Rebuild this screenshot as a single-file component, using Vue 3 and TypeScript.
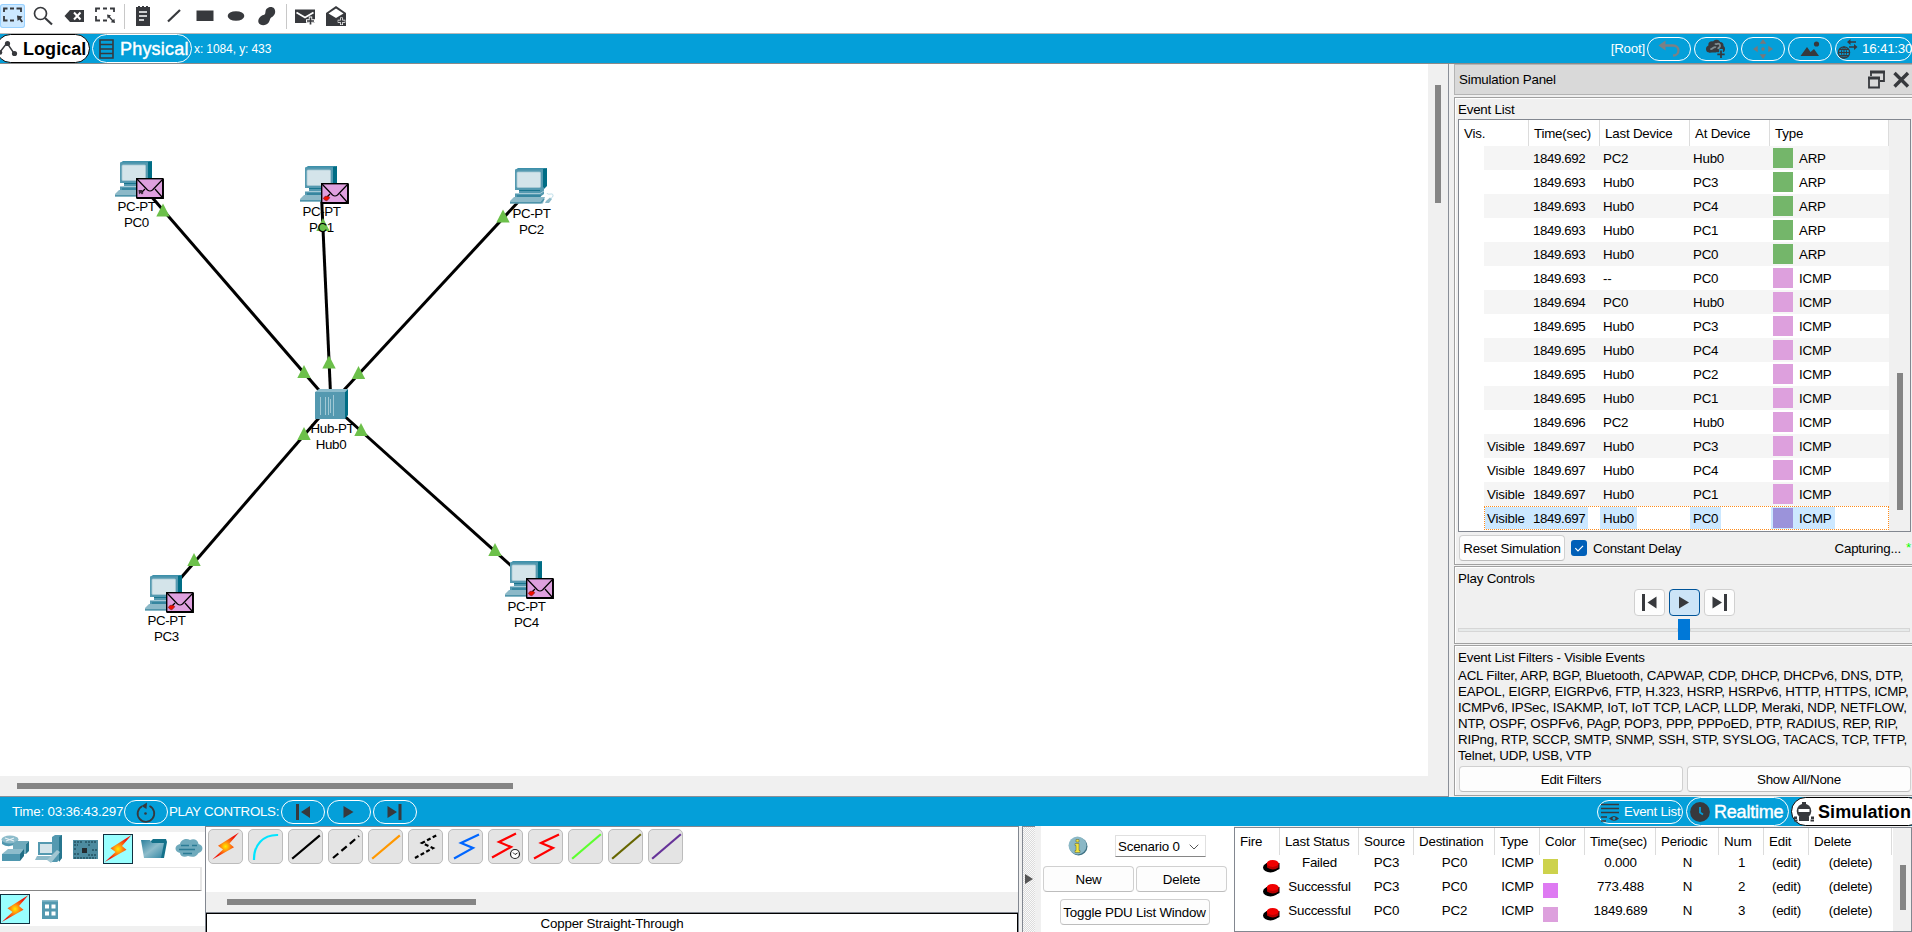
<script setup lang="ts">
interface Pc { name: string; x: number; y: number; mail: 'none' | 'red' | 'dark' }

const pcs: Pc[] = [
  { name: 'PC0', x: 115, y: 161, mail: 'dark' },
  { name: 'PC1', x: 300, y: 166, mail: 'red' },
  { name: 'PC2', x: 510, y: 168, mail: 'none' },
  { name: 'PC3', x: 145, y: 575, mail: 'red' },
  { name: 'PC4', x: 505, y: 561, mail: 'red' },
]
const hub = { x: 331, y: 404 }
const links = [[137, 180], [321, 185], [532, 187], [167, 594], [527, 580]]
const leds = [
  [163, 204], [304, 365.5], [323, 218.5], [329, 356], [503, 210], [358.5, 366.5],
  [304, 427.5], [194, 553.5], [361, 423.5], [495, 543.5],
]

interface Ev { vis: boolean; time: string; last: string; at: string; type: 'ARP' | 'ICMP' }
const raw: [string, string, string][] = [
  ['1849.692', 'PC2', 'Hub0'], ['1849.693', 'Hub0', 'PC3'], ['1849.693', 'Hub0', 'PC4'],
  ['1849.693', 'Hub0', 'PC1'], ['1849.693', 'Hub0', 'PC0'], ['1849.693', '--', 'PC0'],
  ['1849.694', 'PC0', 'Hub0'], ['1849.695', 'Hub0', 'PC3'], ['1849.695', 'Hub0', 'PC4'],
  ['1849.695', 'Hub0', 'PC2'], ['1849.695', 'Hub0', 'PC1'], ['1849.696', 'PC2', 'Hub0'],
  ['1849.697', 'Hub0', 'PC3'], ['1849.697', 'Hub0', 'PC4'], ['1849.697', 'Hub0', 'PC1'],
  ['1849.697', 'Hub0', 'PC0'],
]
const events: Ev[] = raw.map(([time, last, at], i) => ({
  vis: i > 11, time, last, at, type: i < 5 ? 'ARP' : 'ICMP',
}))

const filters = [
  'ACL Filter, ARP, BGP, Bluetooth, CAPWAP, CDP, DHCP, DHCPv6, DNS, DTP,',
  'EAPOL, EIGRP, EIGRPv6, FTP, H.323, HSRP, HSRPv6, HTTP, HTTPS, ICMP,',
  'ICMPv6, IPSec, ISAKMP, IoT, IoT TCP, LACP, LLDP, Meraki, NDP, NETFLOW,',
  'NTP, OSPF, OSPFv6, PAgP, POP3, PPP, PPPoED, PTP, RADIUS, REP, RIP,',
  'RIPng, RTP, SCCP, SMTP, SNMP, SSH, STP, SYSLOG, TACACS, TCP, TFTP,',
  'Telnet, UDP, USB, VTP',
]

const pduHead = ['Fire', 'Last Status', 'Source', 'Destination', 'Type', 'Color', 'Time(sec)', 'Periodic', 'Num', 'Edit', 'Delete']
const pdus = [
  { status: 'Failed', src: 'PC3', dst: 'PC0', color: 'olive', time: '0.000', num: 1 },
  { status: 'Successful', src: 'PC3', dst: 'PC0', color: 'violet', time: '773.488', num: 2 },
  { status: 'Successful', src: 'PC0', dst: 'PC2', color: 'plum', time: '1849.689', num: 3 },
]

const BOLT = 'M28.500 1L7.500 14.200L12.500 18L1.800 28L23.500 15.800L19 12Z'
const cables = [
  { d: 'M5 29C5 15 14 5 28 5', c: '#00e5ff', dash: '' },
  { d: 'M4 28L30 6', c: '#000', dash: '' },
  { d: 'M4 28L30 6', c: '#000', dash: '7 4' },
  { d: 'M4 28L30 6', c: '#ff9800', dash: '' },
  { d: 'M6 28L24 18L13 13L28 5', c: '#000', dash: '4 2.4' },
  { d: 'M6 28L24 18L12 13L29 5', c: '#0066ff', dash: '' },
  { d: 'M4 27L22 17L10 12L26 4', c: '#ff0000', dash: '' },
  { d: 'M6 28L24 18L12 13L29 5', c: '#ff0000', dash: '' },
  { d: 'M4 28L31 5', c: '#5cff2e', dash: '' },
  { d: 'M4 28L31 5', c: '#666600', dash: '' },
  { d: 'M4 28L31 5', c: '#663399', dash: '' },
]
</script>

<template>
  <div class="app">
    <svg class="defs" width="0" height="0">
      <defs>
        <radialGradient id="boltFill" gradientUnits="userSpaceOnUse" cx="15" cy="15" r="12">
          <stop offset="0" stop-color="#ffee00" /><stop offset=".45" stop-color="#ff7a10" /><stop offset="1" stop-color="#f01408" />
        </radialGradient>
        <linearGradient id="teal" x1="0" y1="0" x2="1" y2="1">
          <stop offset="0" stop-color="#2b7f9c" /><stop offset=".5" stop-color="#8dbccb" /><stop offset="1" stop-color="#2f86a3" />
        </linearGradient>
      </defs>
    </svg>

    <header class="tools">
      <span class="tool on"><svg viewBox="0 0 25 25"><path d="M4 8V4.500H7.500M10 4.500H14M16.500 4.500H21V8M4 12V16.500H7.500M10 16.500H14" fill="none" stroke="#37393d" stroke-width="1.800" /><path d="M17 11.500L22.500 12.500L20.800 14.200L23 17.500L21.500 18.600L19.300 15.500L17.600 17Z" fill="#37393d" /></svg></span>
      <span class="tool"><svg viewBox="0 0 25 25"><circle cx="9.500" cy="9.500" r="6" fill="none" stroke="#37393d" stroke-width="1.700" /><path d="M14 14L21 20.500" stroke="#37393d" stroke-width="2.200" /></svg></span>
      <span class="tool"><svg viewBox="0 0 25 25"><path d="M2.500 12L8 6H22V18H8Z" fill="#37393d" /><path d="M12 8.500L18.500 15.500M18.500 8.500L12 15.500" stroke="#fff" stroke-width="2" /></svg></span>
      <span class="tool"><svg viewBox="0 0 25 25"><path d="M3 8V4.500H7M10 4.500H14M17 4.500H21V8M3 12V16.500H7M10 16.500H14" fill="none" stroke="#37393d" stroke-width="1.800" /><path d="M14 10.500L18 11.300L16.800 12.500L20 16L21.400 14.800L22 19L17.700 18.300L19 17L15.800 13.600L14.700 14.800Z" fill="#37393d" /></svg></span>
      <i class="sep" />
      <span class="tool"><svg viewBox="0 0 25 25"><path d="M5 3H7V2H9V3H11V2H13V3H15V2H17V3H19V22H5Z" fill="#37393d" /><path d="M8 8H16M8 12H16M8 16H13" stroke="#fff" stroke-width="1.600" /></svg></span>
      <span class="tool"><svg viewBox="0 0 25 25"><path d="M6 17.500L18 6" stroke="#37393d" stroke-width="2.200" /></svg></span>
      <span class="tool"><svg viewBox="0 0 25 25"><path d="M3.500 6.500H20.500V17H3.500Z" fill="#37393d" /></svg></span>
      <span class="tool"><svg viewBox="0 0 25 25"><ellipse cx="12" cy="12" rx="8.300" ry="4.800" fill="#37393d" /></svg></span>
      <span class="tool"><svg viewBox="0 0 25 25"><path d="M10.500 7.500C11 3 17 1.500 19.200 4.500C21.500 8 19.500 12 16.500 13.300C14.600 14.200 15.300 16.500 13.500 18.800C11 22 5 22 3.500 18.500C2.500 15 5.500 11.500 8.500 11C10.500 10.500 10.200 9.500 10.500 7.500Z" fill="#37393d" /></svg></span>
      <i class="sep" />
      <span class="tool"><svg viewBox="0 0 25 25"><path d="M2 5.500H22V19H2Z" fill="#37393d" /><path d="M3.500 8.500L12 13.500L20.500 8.500" fill="none" stroke="#fff" stroke-width="1.800" /><path d="M17.500 12.500V21.500M13 17H22" stroke="#fff" stroke-width="3.400" /><path d="M17.500 13.500V20.500M14 17H21" stroke="#37393d" stroke-width="1.700" /></svg></span>
      <span class="tool"><svg viewBox="0 0 25 25"><path d="M2 9L12 2L22 9V22H2Z" fill="#37393d" /><path d="M4.500 9.500L12 4.500L19.500 9.500L12 14Z" fill="#fff" /><path d="M17.500 13.500V21M13.700 17.200H21.300" stroke="#fff" stroke-width="3" /><path d="M17.500 14V20.500M14.200 17.200H20.800" stroke="#37393d" stroke-width="1.500" /></svg></span>
    </header>

    <nav class="bar">
      <span class="tab active logical"><svg width="20" height="18" viewBox="0 0 20 18"><path d="M1 12L8 3L15.500 14" fill="none" stroke="#37393d" stroke-width="1.400" /><circle cx="1" cy="12.500" r="2.300" fill="#37393d" /><circle cx="8.500" cy="3.500" r="2.600" fill="#37393d" /><circle cx="15.500" cy="13.500" r="2.600" fill="#37393d" /></svg><b class="t-logical">Logical</b></span>
      <span class="tab physical"><svg width="15" height="20" viewBox="0 0 15 20"><path d="M1 1H14V19H1ZM1 5.500H14M1 10H14M1 14.500H14" fill="none" stroke="#37393d" stroke-width="1.600" /></svg><span class="t-physical">Physical</span></span>
      <span class="coords">x: 1084, y: 433</span>
      <span class="grow" />
      <span class="root">[Root]</span>
      <span class="pill"><svg width="44" height="24" viewBox="0 0 44 24"><path d="M17 8.500H26C33.500 8.500 33 18.500 26 18.500" fill="none" stroke="#7c8085" stroke-width="2.300" /><path d="M11.500 8.500L18.500 3.500V13.500Z" fill="#7c8085" /></svg></span>
      <span class="pill"><svg width="44" height="24" viewBox="0 0 44 24"><g fill="#37393d"><circle cx="15.500" cy="12" r="3.500" /><circle cx="18" cy="8" r="3.700" /><circle cx="22.500" cy="6.500" r="3.700" /><circle cx="26" cy="8.500" r="3.500" /><circle cx="27.500" cy="12" r="3.500" /><path d="M15 9H28V15.500H15Z" /></g><path d="M16.500 11.500C18 13.500 20 8.500 22 10.500M21 6.500C22.500 8.500 24.500 4.500 26 8C27 10.500 22 12 25.500 11" fill="none" stroke="#7f8b90" stroke-width="1.800" /><path d="M27 12V22M22 17.300H32" stroke="#049fd9" stroke-width="3.600" /><path d="M27 13.500V21M23.300 17.300H30.700" stroke="#37393d" stroke-width="1.800" /></svg></span>
      <span class="pill"><svg width="44" height="24" viewBox="0 0 44 24"><path d="M22 2L25.300 6.700H18.700ZM22 22L25.300 17.300H18.700ZM12 12L16.700 8.700V15.300ZM32 12L27.300 8.700V15.300Z" fill="#77787b" /><circle cx="22" cy="12" r="1.800" fill="#77787b" /></svg></span>
      <span class="pill"><svg width="44" height="24" viewBox="0 0 44 24"><path d="M12.500 19L19 10L22.500 15L26 12L31 19Z" fill="#37393d" /><circle cx="28.500" cy="7" r="2.600" fill="#37393d" /></svg></span>
      <span class="pill clock"><svg width="22" height="22" viewBox="0 0 22 22"><circle cx="8" cy="14.500" r="5.600" fill="none" stroke="#37393d" stroke-width="1.300" /><ellipse cx="8" cy="14.500" rx="2.500" ry="5.600" fill="none" stroke="#37393d" /><path d="M2 14.500H14M3 11.500H13M3 17.500H13M8 9V20" stroke="#37393d" /><path d="M13 4H20M13 9H19" stroke="#37393d" stroke-width="1.700" /><path d="M11 4L14.500 1V7ZM21.500 9L18 6V12Z" fill="#37393d" /></svg><span class="t-clock">16:41:30</span></span>
    </nav>

    <main class="middle">
      <section class="workspace">
        <div class="canvas-row">
          <svg class="canvas" width="1428" height="712" viewBox="0 64 1428 712">
            <line v-for="(l, i) in links" :key="'l' + i" :x1="l[0]" :y1="l[1]" :x2="hub.x" :y2="hub.y" stroke="#000" stroke-width="3" />
            <path v-for="(t, i) in leds" :key="'t' + i" :transform="`translate(${t[0]} ${t[1]})`" d="M0 -.5L6.700 12.500H-6.700Z" fill="#6cc04a" />
            <g transform="translate(315 389)">
              <path d="M0 3L4 0H33L30 3Z" fill="#8cbccc" /><path d="M0 3H30V30H0Z" fill="#5499b0" /><path d="M30 3L33 0V26L30 30Z" fill="#006d85" />
              <path d="M5.500 8V26M10.500 8V26M13.500 8V26M15.500 10V24M18.500 6V27" stroke="#a9cdd8" stroke-width=".9" />
            </g>
            <text x="332.500" y="432.500">Hub-PT</text><text x="331" y="448.500">Hub0</text>
            <g v-for="p in pcs" :key="p.name" :transform="`translate(${p.x} ${p.y})`">
              <path d="M5 2L8 0H37L33 2Z" fill="#3d90aa" /><path d="M33 1L37 0V18L33 22Z" fill="#006d85" />
              <path d="M5 1.500H33V22H5Z" fill="#5499b0" /><rect x="7" y="4" width="23.500" height="15.500" rx="1" fill="#d4e4ea" stroke="#a9c9d4" stroke-width=".8" />
              <path d="M9 22H30L34 19V26L30 29H5V26H9Z" fill="#5499b0" /><path d="M5 25.500H30L34 23" stroke="#a5cad6" fill="none" /><path d="M9 22.500H30M7 28H31" stroke="#19758e" stroke-width="1.200" />
              <path d="M4 29H35L33 35.500H0V33Z" fill="#8cb9c8" /><path d="M0 34.700H31L34 31" stroke="#4f94aa" stroke-width="1.500" fill="none" />
              <g v-if="p.mail === 'none'"><path d="M36 33L40 29.500L42 31L39 35H35Z" fill="#8cb9c8" /><path d="M37 25C38 28 43 24 43 27.500C43 30 41 29 41 31" stroke="#b9dce8" fill="none" stroke-width="1" /></g>
              <g v-else transform="translate(21 17)">
                <rect x=".7" y=".7" width="26.200" height="19.200" fill="#dfa0df" stroke="#000" stroke-width="1.400" /><path d="M27 1V20H1" fill="none" stroke="#000" stroke-width="1.800" />
                <path d="M1 1L11.500 12Q14 14 16.500 12L27 1M6 14L9 11M26 19L19 11" fill="none" stroke="#000" stroke-width="1.200" />
                <path v-if="p.mail === 'red'" d="M2.200 15.500L4 13.300H7.500L8.800 14.800L6 17.800L4 17.300Z" fill="#f00c00" stroke="#5c1a10" stroke-width=".5" />
                <path v-else d="M2.500 12H6.500L6 13L7.500 15L6 16.500L4.500 15L3 16.500Z" fill="#3a2a3a" />
              </g>
              <text x="21.500" y="49.500">PC-PT</text><text x="21.500" y="65.500">{{ p.name }}</text>
            </g>
          </svg>
          <div class="vscroll"><i /></div>
        </div>
        <div class="hscroll"><i /></div>
      </section>

      <aside class="side">
        <div class="side-head"><span>Simulation Panel</span>
          <svg width="46" height="20" viewBox="0 0 46 20"><path d="M6 6V2H19V11H15" fill="none" stroke="#37393d" stroke-width="1.800" /><path d="M5 2H20" stroke="#37393d" stroke-width="3" /><path d="M4 8V17.500H14V8Z" fill="none" stroke="#37393d" stroke-width="1.800" /><path d="M3 8H15" stroke="#37393d" stroke-width="3" /><path d="M29.500 3L43 16.500M43 3L29.500 16.500" stroke="#37393d" stroke-width="3.400" /></svg>
        </div>
        <div class="box events-box">
          <div class="caption">Event List</div>
          <div class="events">
            <div class="etable">
              <div class="erow ehead"><span>Vis.</span><span>Time(sec)</span><span>Last Device</span><span>At Device</span><span>Type</span></div>
              <div v-for="(e, i) in events" :key="i" class="erow" :class="{ odd: i % 2 === 0, sel: i === 15 }">
                <i class="indent" />
                <div class="ebody">
                  <span class="c vis"><em>{{ e.vis ? 'Visible' : '' }}</em></span>
                  <span class="c time"><em>{{ e.time }}</em></span>
                  <span class="c last"><em>{{ e.last }}</em></span>
                  <span class="c at"><em>{{ e.at }}</em></span>
                  <span class="c type"><em><i class="sw" :class="e.type" />{{ e.type }}</em></span>
                </div>
              </div>
            </div>
            <div class="escroll"><i /></div>
          </div>
          <div class="below">
            <button class="btn reset">Reset Simulation</button>
            <span class="check"><svg width="16" height="16" viewBox="0 0 16 16"><path d="M4.300 8.200L7 11L12 5.800" fill="none" stroke="#fff" stroke-width="1.200" /></svg></span>
            <span class="delay">Constant Delay</span><span class="grow" /><span class="capturing">Capturing...</span><span class="star">*</span>
          </div>
        </div>
        <div class="box play-box">
          <div class="caption">Play Controls</div>
          <div class="plays">
            <span class="pbtn"><svg width="15" height="17" viewBox="0 0 15 17"><path d="M0 0H3V17H0ZM14.500 2.500V14.500L5.500 8.500Z" fill="#37393d" /></svg></span>
            <span class="pbtn on"><svg width="15" height="17" viewBox="0 0 15 17"><path d="M2 2.500L12 8.500L2 14.500Z" fill="#37393d" /></svg></span>
            <span class="pbtn"><svg width="15" height="17" viewBox="0 0 15 17"><path d="M12 0H15V17H12ZM.5 2.500V14.500L10 8.500Z" fill="#37393d" /></svg></span>
          </div>
          <div class="slider"><i class="track" /><i class="knob" /><i class="track" /></div>
        </div>
        <div class="box filter-box">
          <div class="caption">Event List Filters - Visible Events</div>
          <div class="filters"><div v-for="f in filters" :key="f"><span>{{ f }}</span></div></div>
          <div class="fbtns"><button class="btn">Edit Filters</button><button class="btn">Show All/None</button></div>
        </div>
      </aside>
    </main>

    <nav class="bar lower">
      <span class="clocktime">Time: 03:36:43.297</span>
      <span class="pill"><svg width="44" height="24" viewBox="0 0 44 24"><path d="M18 6.200A8.300 8.300 0 1 0 25.500 6" fill="none" stroke="#37393d" stroke-width="1.800" /><path d="M23 2.500L17.500 6L22.500 9Z" fill="#37393d" /><circle cx="21.500" cy="13.500" r="1.300" fill="#37393d" /></svg></span>
      <span class="pc-label">PLAY CONTROLS:</span>
      <span class="pill"><svg width="44" height="24" viewBox="0 0 44 24"><path d="M15 4H18V20H15ZM29 6V18L20 12Z" fill="#37393d" /></svg></span>
      <span class="pill p2"><svg width="44" height="24" viewBox="0 0 44 24"><path d="M16.500 6V18L26.500 12Z" fill="#37393d" /></svg></span>
      <span class="pill p2"><svg width="44" height="24" viewBox="0 0 44 24"><path d="M25.500 4H28.500V20H25.500ZM14.500 6V18L24 12Z" fill="#37393d" /></svg></span>
      <span class="grow" />
      <span class="pill evlist"><svg width="20" height="20" viewBox="0 0 20 20"><path d="M1 2.500H19M1 6.500H19M1 10.500H19M1 15H7M1 19H6" stroke="#37393d" stroke-width="1.600" /><path d="M9 16.500Q14 11.500 19 16.500Q14 21 9 16.500Z" fill="#37393d" /><circle cx="14" cy="16.500" r="1.400" fill="#049fd9" /></svg><span class="t-ev">Event List</span></span>
      <span class="tab realtime"><svg width="20" height="20" viewBox="0 0 20 20"><circle cx="10" cy="10" r="9.900" fill="#37393d" /><path d="M10 5V10.500L13 12.500" fill="none" stroke="#049fd9" stroke-width="1.800" /></svg><span class="t-real">Realtime</span></span>
      <span class="tab active simulation"><svg width="20" height="20" viewBox="0 0 20 20"><circle cx="10" cy="9" r="7.300" fill="#37393d" /><path d="M8 1.200H12" stroke="#37393d" stroke-width="2.400" /><path d="M4.500 7H15.500V10H4.500Z" fill="#fff" /><path d="M0 14.500H3V17H0ZM17 14.500H20V17H17ZM5 15H15V19H5ZM0 17.500H3.500V19.500H0ZM16.500 17.500H20V19.500H16.500Z" fill="#37393d" /></svg><b class="t-sim">Simulation</b></span>
    </nav>

    <footer class="bottom">
      <div class="devices">
        <div class="cats">
          <svg width="30" height="30" viewBox="0 0 30 30"><path d="M2 5Q9 0 18 4V9Q9 15 2 10Z" fill="#4f97af" /><ellipse cx="10" cy="5.500" rx="8.500" ry="4" fill="#8dbccb" /><path d="M5 4L14 7M14 4L6 7" stroke="#e5f0f4" stroke-width="1.200" /><path d="M13 10L16 7H29L26 10ZM13 10H26V20H13Z" fill="#6faabc" /><path d="M26 10L29 7V17L26 20Z" fill="#28778e" /><path d="M2 20L8 15H24L20 20Z" fill="#8dbccb" /><path d="M2 20H20V27H2Z" fill="#4f97af" /><path d="M20 20L24 15V22L20 27Z" fill="#1f6c84" /></svg>
          <svg width="30" height="30" viewBox="0 0 30 30"><path d="M3 8H20V21H3Z" fill="#5499b0" /><path d="M5 10H18V19H5Z" fill="#d4e4ea" /><path d="M2 22H20L18 26H0Z" fill="#8cb9c8" /><path d="M17 3L20 1H27V24L22 28H17Z" fill="#5499b0" /><path d="M24 3L27 1V24L24 28Z" fill="#27768e" /><path d="M12 26L22 16L25 18L16 29Z" fill="#a1c6d2" /></svg>
          <svg width="30" height="30" viewBox="0 0 30 30"><path d="M3 6H28V25H3Z" fill="#4d8ba0" /><path d="M4 8H12M15 8H27M4 11H8M18 11H21M4 20H9M18 21H27M22 16H27M4 15H7M4 24H26" stroke="#245362" stroke-width="1.400" stroke-dasharray="2 1" /><path d="M12 14H17V19H12Z" fill="#252b30" /></svg>
          <span class="bolt"><svg width="28" height="28" viewBox="1 1 28 28"><path :d="BOLT" fill="url(#boltFill)" /></svg></span>
          <svg width="30" height="30" viewBox="0 0 30 30"><path d="M12 7L14 5H27L28 8L25 24H8Z" fill="#14718a" /><path d="M2 6H11L13 9H25L22 24H5Z" fill="url(#teal)" /></svg>
          <svg width="30" height="30" viewBox="0 0 30 30"><path d="M6 10C7 5 13 4 16 6C20 4 24 6 24.500 10C30 11 29.500 18 24.500 19C22 24 17 23 14 22C10 24 6 22 6 19C0 18 0 11 6 10Z" fill="#6faabc" /><path d="M7 11.500H15M18 11.500H23M5 15.500H21M9 19.500H18" stroke="#2a7b95" stroke-width="1.500" /></svg>
        </div>
        <div class="search" />
        <div class="subcats">
          <span class="bolt"><svg width="28" height="28" viewBox="1 1 28 28"><path :d="BOLT" fill="url(#boltFill)" /></svg></span>
          <svg width="16" height="19" viewBox="0 0 16 19"><path d="M0 0H16V19H0Z" fill="#5499b0" /><path d="M0 0H16V1.500H0Z" fill="#8cbccc" /><path d="M3 4.500H7V8.500H3ZM9.500 4.500H13.500V8.500H9.500ZM3 11.500H7V15.500H3ZM9.500 11.500H13.500V15.500H9.500Z" fill="#fff" /></svg>
        </div>
      </div>
      <div class="cables">
        <div class="cable-row">
          <span class="cable"><svg width="33" height="33" viewBox="-1.500 -1.500 33 33"><path :d="BOLT" fill="url(#boltFill)" /></svg></span>
          <span v-for="(c, i) in cables" :key="i" class="cable"><svg width="33" height="33" viewBox="0 0 33 33"><path :d="c.d" fill="none" :stroke="c.c" stroke-width="2.200" stroke-linecap="square" :stroke-dasharray="c.dash" :class="{ dashed: c.dash }" /><g v-if="i === 6"><circle cx="26" cy="24" r="4.500" fill="#fff" stroke="#222" stroke-width="1.200" /><path d="M24 22.500L26 24.500L28.500 23" fill="none" stroke="#222" /></g></svg></span>
        </div>
        <div class="cscroll"><i /></div>
        <div class="cname"><span>Copper Straight-Through</span></div>
      </div>
      <div class="splitter"><div class="grip"><svg width="8" height="10" viewBox="0 0 8 10"><path d="M0 0L8 5L0 10Z" fill="#555" /></svg></div></div>
      <div class="scenario">
        <div class="srow first">
          <svg width="20" height="20" viewBox="0 0 20 20"><circle cx="10.500" cy="10.500" r="9" fill="#3f7284" /><circle cx="9.500" cy="9.500" r="9" fill="#8bb8c6" /><path d="M7 7.500H11V14.500H12V16.500H7V14.500H8V9.500H7ZM8 3.500H11V6H8Z" fill="#f1e33d" stroke="#5b6034" stroke-width=".5" /></svg>
          <span class="select"><span>Scenario 0</span><svg width="10" height="6" viewBox="0 0 10 6"><path d="M.7 .7L5 5L9.300 .7" fill="none" stroke="#555" /></svg></span>
        </div>
        <div class="srow two"><button class="btn">New</button><button class="btn">Delete</button></div>
        <button class="btn toggle">Toggle PDU List Window</button>
      </div>
      <div class="pdu">
        <div class="ptable">
          <div class="prow phead"><span v-for="h in pduHead" :key="h">{{ h }}</span></div>
          <div v-for="p in pdus" :key="p.num" class="prow">
            <span class="fire"><svg width="17" height="14" viewBox="0 0 17 14"><ellipse cx="7.500" cy="8.500" rx="7.500" ry="5" fill="#000" /><path d="M3 4H16.500V10Q10 14 4 10Z" fill="#000" /><path d="M4 4V8.500Q10 12.500 15.500 8.500V4Z" fill="#b80000" /><ellipse cx="9.700" cy="4.400" rx="6" ry="3.500" fill="#f00000" /></svg></span>
            <span>{{ p.status }}</span><span>{{ p.src }}</span><span>{{ p.dst }}</span><span>ICMP</span>
            <span class="colcell"><i :class="p.color" /></span>
            <span>{{ p.time }}</span><span>N</span><span>{{ p.num }}</span><span>(edit)</span><span>(delete)</span>
          </div>
        </div>
        <div class="pscroll"><i /></div>
      </div>
    </footer>
  </div>
</template>

<style>
body { margin: 0; overflow: hidden; background: #f0f0f0; }
</style>

<style scoped>
.app { width: 1912px; height: 932px; overflow: hidden; display: flex; flex-direction: column; background: #f0f0f0; color: #000; font: 13.33px/16px "Liberation Sans", Arial, sans-serif; letter-spacing: -.2px; white-space: nowrap; position: relative; }
.app * { box-sizing: border-box; }
.defs { position: absolute; }
svg { display: block; flex: none; }
i, em { font-style: normal; display: block; }
.grow { flex: 1; }
.tools { height: 34px; background: #fff; border-bottom: 1px solid #b9b9b9; display: flex; gap: 6px; padding-top: 4px; flex: none; }
.tool { width: 25px; height: 24px; flex: none; }
.tool svg { width: 25px; height: 25px; }
.tool.on { background: #cce8ff; border-radius: 3px; box-shadow: inset 0 0 0 1px #99d1ff; }
.sep { width: 1px; height: 25px; background: #c8c8c8; }
.bar { height: 30px; background: #049fd9; border-bottom: 1px solid #8a8a8a; display: flex; align-items: center; color: #fff; flex: none; }
.tab { height: 29px; border: 1px solid #fff; border-radius: 14.500px; display: flex; align-items: center; font-size: 18px; flex: none; }
.tab.active { background: #fff; border-color: #000; color: #000; }
.logical { width: 94px; margin-left: -4px; padding-left: 2px; }
.t-logical { margin-left: 4px; letter-spacing: .05px; }
.physical { width: 100px; margin-left: 2px; padding-left: 6px; }
.t-physical { margin-left: 6px; letter-spacing: .2px; -webkit-text-stroke: .4px #fff; }
.coords { margin-left: 2px; font-size: 12px; letter-spacing: -.1px; }
.root { margin-right: 2px; }
.pill { width: 44px; height: 24px; border: 1px solid #fff; border-radius: 12px; flex: none; display: flex; align-items: center; justify-content: center; margin-right: 3px; }
.pill svg { margin: 0 -1px; }
.clock { width: 77px; margin-right: 0; justify-content: flex-start; }
.pill.clock svg { margin: 0; }
.t-clock { margin-left: 4px; }
.middle { display: flex; height: 733px; flex: none; }
.workspace { width: 1449px; border-right: 1px solid #8a8f98; border-bottom: 1px solid #8a8f98; display: flex; flex-direction: column; flex: none; }
.canvas-row { display: flex; height: 712px; }
.canvas { background: #fff; }
.canvas text { font-size: 13.33px; text-anchor: middle; letter-spacing: -.35px; }
.vscroll { width: 20px; padding: 21px 0 0 7px; }
.vscroll i { width: 6px; height: 118px; background: #858585; }
.hscroll { height: 20px; padding: 7px 0 0 17px; }
.hscroll i { width: 496px; height: 6px; background: #858585; }
.side { flex: 1; padding: 0 0 0 5px; }
.side-head { height: 31px; background: #d9d9d9; border: 1px solid #b4b4b4; border-right: 0; padding: 1px 1px 0 4px; display: flex; align-items: center; justify-content: space-between; }
.box { border: 1px solid #a0a0a0; border-right: 0; box-shadow: inset 1px 1px 0 #fff; margin-top: 1px; padding-left: 3px; }
.events-box { height: 468px; margin-top: 2px; }
.caption { height: 16px; }
.events-box .caption { margin-top: 3px; height: 18px; line-height: 17px; }
.events { width: 453px; height: 413px; border: 1px solid #828790; display: flex; }
.etable { width: 430px; background: #fff; }
.erow { display: flex; height: 24px; }
.ehead { height: 26px; line-height: 27px; }
.ehead span { border-right: 1px solid #dcdcdc; padding-left: 5px; }
.ehead span:nth-child(1) { width: 70px; }
.ehead span:nth-child(2) { width: 71px; }
.ehead span:nth-child(3) { width: 90px; }
.ehead span:nth-child(4) { width: 80px; }
.ehead span:nth-child(5) { width: 119px; }
.indent { width: 25px; }
.ebody { display: flex; width: 405px; border: 1px solid transparent; line-height: 24px; }
.odd .ebody { background: #f5f5f5; }
.sel .ebody { border: 1px dotted #ff8c1a; }
.c em { display: inline-flex; height: 22px; padding: 0 3px; align-items: flex-start; }
.vis { width: 44px; }
.vis em { padding: 0 2px; width: 44px; }
.time { width: 71px; }
.time em { padding-left: 4px; letter-spacing: -.42px; }
.last { width: 90px; }
.at { width: 80px; }
.type em { padding-left: 2px; margin-left: 1px; }
.sw { width: 20px; height: 20px; margin: 1px 6px 0 0; }
.ARP { background: #74b66a; }
.ICMP { background: #dda0dd; }
.sel em { background: #cce8ff; }
.sel .sw { background: #9b93da; }
.escroll { width: 21px; padding: 253px 0 0 8px; }
.escroll i { width: 6px; height: 137px; background: #858585; }
.btn { font: inherit; letter-spacing: inherit; background: #fdfdfd; border: 1px solid #d0d0d0; border-bottom-color: #bdbdbd; border-radius: 4px; padding: 0; color: #000; height: 26px; white-space: nowrap; }
.below { display: flex; align-items: center; padding: 3px 0 0 1px; }
.reset { width: 106px; padding-top: 1px; }
.check { width: 16px; height: 16px; background: #005fb8; border-radius: 3px; margin: 0 6px; }
.delay, .capturing { padding-top: 1px; }
.capturing { margin-right: 5px; }
.star { color: #00ff00; width: 6px; }
.play-box { height: 78px; }
.play-box .caption { margin-top: 4px; }
.plays { display: flex; gap: 4px; justify-content: center; margin-top: 2px; padding-right: 2px; }
.pbtn { width: 31px; height: 27px; border: 1px solid #d0d0d0; border-radius: 4px; background: #fdfdfd; display: flex; align-items: center; justify-content: center; }
.pbtn.on { background: #cce4f7; border-color: #005499; }
.slider { display: flex; align-items: center; height: 21px; margin-top: 3px; width: 452px; }
.track { height: 4px; flex: 1; background: #e7eaea; border: 1px solid #d6d6d6; }
.knob { width: 12px; height: 21px; background: #0078d7; }
.filter-box { height: 151px; }
.filter-box .caption { margin-top: 4px; }
.filters { margin-top: 2px; }
.fbtns { display: flex; gap: 4px; padding: 2px 0 0 1px; }
.fbtns .btn { width: 224px; padding-top: 1px; }
.lower { border-bottom: 0; height: 29px; }
.clocktime { width: 112px; margin-left: 12px; letter-spacing: -.18px; }
.lower .pill { margin-right: 1px; }
.pc-label { width: 112px; letter-spacing: -.3px; }
.lower .pill.p2 { margin-left: 1px; }
.lower .evlist { width: 86px; margin-right: 3px; justify-content: flex-start; padding-left: 2px; }
.pill.evlist svg { margin: 0; }
.t-ev { margin-left: 4px; }
.realtime { width: 103px; padding-left: 3px; }
.t-real { margin-left: 4px; -webkit-text-stroke: .4px #fff; }
.simulation { width: 132px; margin: 0 -11px 0 2px; padding-left: 2px; }
.t-sim { margin-left: 4px; letter-spacing: .1px; }
.bottom { display: flex; flex: 1; min-height: 0; }
.devices { width: 205px; margin: 6px 0; background: #fff; height: 94px; flex: none; }
.cats { display: flex; gap: 5px; height: 35px; padding-top: 2px; }
.bolt { width: 30px; height: 30px; background: #99ffff; border: 1px solid #103040; flex: none; }
.cats .bolt { margin-left: -2px; margin-right: 1px; }
.search { height: 24px; width: 202px; border: 1px solid #e6e6e6; border-width: 1px 2px 1px 0; border-bottom-color: #868686; }
.subcats { display: flex; align-items: center; gap: 12px; margin-top: 3px; }
.cables { width: 814px; border-left: 1px solid #828790; border-right: 1px solid #828790; border-top: 1px solid #828790; display: flex; flex-direction: column; flex: none; }
.cable-row { height: 65px; flex: none; background: #fff; display: flex; gap: 5px; padding: 2px 0 0 2px; }
.cable { width: 35px; height: 35px; border: 1px solid #bcbcbc; border-radius: 5px; background: #e4e4e4; flex: none; }
.dashed { stroke-linecap: butt; }
.cscroll { flex: none; padding: 7px 0 0 21px; border-bottom: 1px solid #828790; height: 21px; }
.cscroll i { width: 249px; height: 6px; background: #858585; }
.cname { flex: 1; min-height: 0; overflow: hidden; background: #fff; border: 1px solid #000; border-width: 1px 1px 0 1px; text-align: center; line-height: 19px; }
.splitter { width: 22px; padding-left: 3px; flex: none; }
.grip { width: 13px; height: 106px; border-left: 1px solid #828790; border-top: 1px solid #828790; background: repeating-conic-gradient(#dcdcdc 0 25%, #fafafa 0 50%) 0 0 / 2px 2px; padding: 47px 0 0 2px; }
.scenario { width: 193px; background: #fff; padding-left: 2px; flex: none; }
.srow { display: flex; }
.first { padding: 9px 0 0 25px; height: 40px; gap: 27px; }
.first > svg { margin-top: 1px; }
.select { width: 91px; height: 22px; border: 1px solid #e0e0e0; border-bottom: 1px solid #868686; display: flex; align-items: center; justify-content: space-between; padding: 1px 6px 0 2px; }
.two { gap: 2px; }
.two .btn { width: 91px; padding-top: 1px; }
.toggle { display: block; width: 150px; margin: 7px 0 0 17px; padding: 1px 1px 0 0; }
.pdu { width: 678px; height: 105px; margin-top: 1px; border: 1px solid #828790; background: #fff; display: flex; flex: none; }
.ptable { width: 658px; }
.prow { display: grid; grid-template-columns: 45px 79px 55px 81px 45px 45px 71px 63px 45px 45px 83px; height: 24px; line-height: 20px; text-align: center; }
.phead { height: 25px; line-height: 27px; text-align: left; }
.phead span { border-right: 1px solid #dcdcdc; padding-left: 5px; }
.fire svg { margin: 6px 0 0 28px; }
.colcell i { width: 15px; height: 15px; margin: 6px 0 0 3px; }
.olive { background: #cdd24c; }
.violet { background: #de7af2; }
.plum { background: #dda0dd; }
.pscroll { width: 18px; background: #f0f0f0; padding: 37px 0 0 7px; }
.pscroll i { width: 6px; height: 45px; background: #858585; }
</style>
